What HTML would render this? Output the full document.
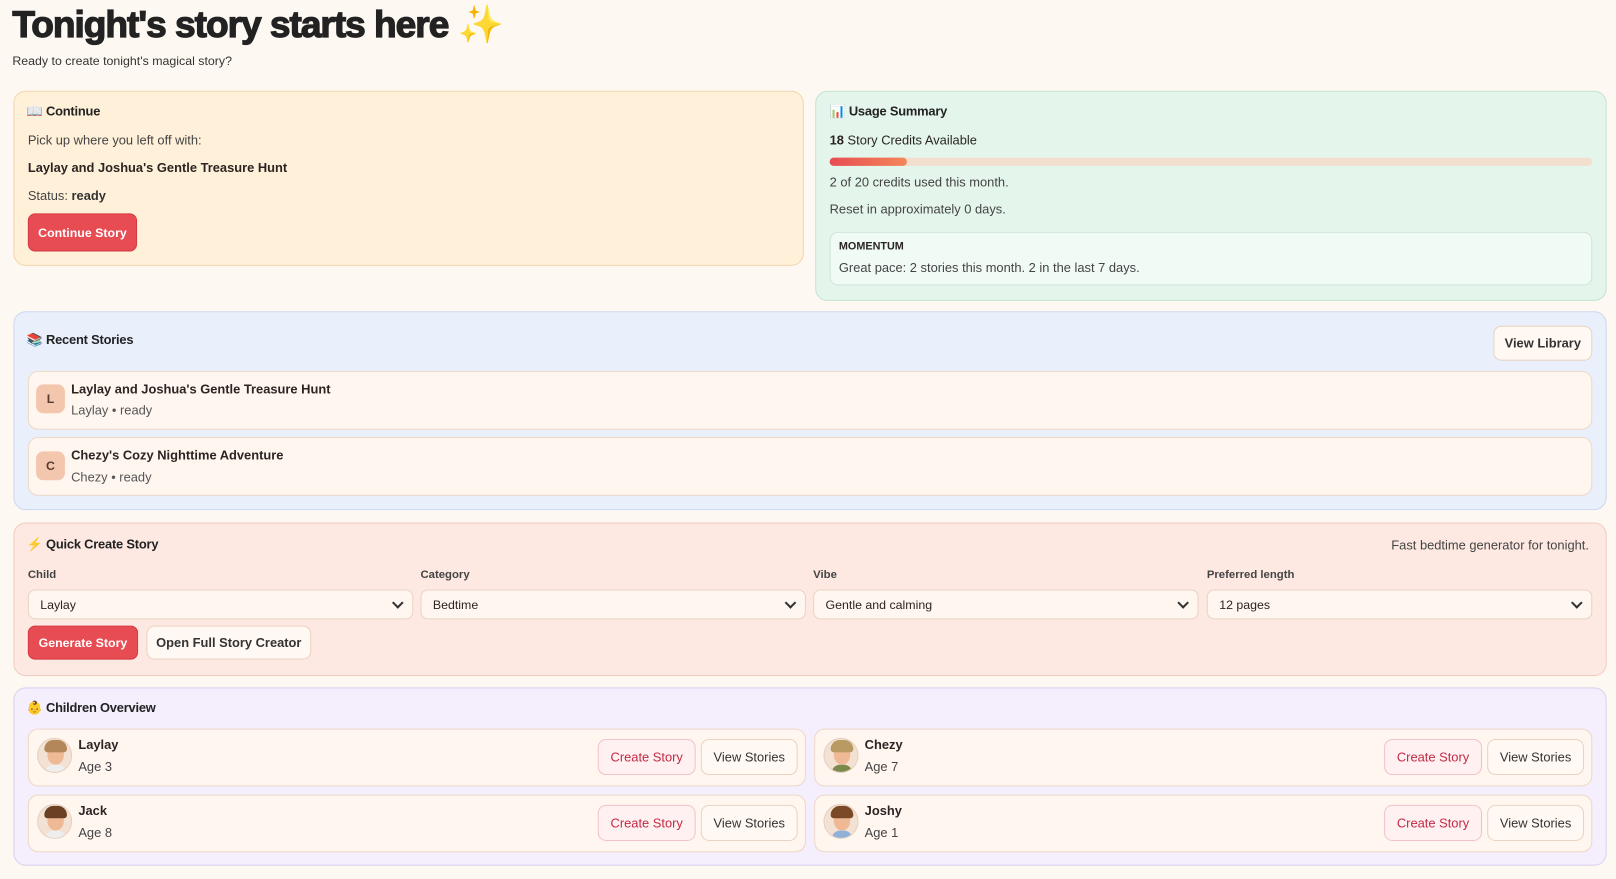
<!DOCTYPE html>
<html><head><meta charset="utf-8"><style>
*{box-sizing:border-box;margin:0;padding:0}
body{width:1616px;height:879px;background:#fef8f2;font-family:"Liberation Sans",sans-serif;color:#2a2522;overflow:hidden;font-size:12.5px}
#w{position:absolute;left:0;top:0;width:1568px;height:853px;transform:scale(1.0306);transform-origin:0 0}
.a{position:absolute}
h1{position:absolute;left:12px;top:3px;font-size:36px;font-weight:900;letter-spacing:-1px;color:#222;-webkit-text-stroke:1.2px #222}
.card{position:absolute;border-radius:12px;border:1px solid}
.t{position:absolute;font-weight:bold;font-size:12.5px;color:#222;letter-spacing:-0.2px}
.btnr{position:absolute;background:#e84c53;color:#fff;font-weight:bold;border-radius:7px;font-size:12px;display:flex;align-items:center;justify-content:center;border:1px solid #d43a42}
.btnw{position:absolute;background:#fff8f3;color:#333;border:1px solid #ead3c2;border-radius:8px;font-size:12.5px;display:flex;align-items:center;justify-content:center}
.btnp{position:absolute;background:#fff0f1;color:#c22b45;border:1px solid #f0c3c8;border-radius:8px;font-size:12.5px;display:flex;align-items:center;justify-content:center}
.row{position:absolute;background:#fff6f0;border:1px solid #eed8c7;border-radius:10px}
.sel{position:absolute;background:#fff6f0;border:1px solid #ead3c2;border-radius:7px;height:29px;top:572px;width:374px;font-size:12px;padding:7px 11px}
.sel:after{content:"";position:absolute;right:10px;top:8px;width:6px;height:6px;border-right:2px solid #333;border-bottom:2px solid #333;transform:rotate(45deg)}
.lbl{position:absolute;top:552px;font-size:11px;font-weight:bold;color:#444}
.av{position:absolute;width:34px;height:34px;border-radius:50%;background:#f3e2d4;border:1px solid #e6d0c0;overflow:hidden}
.av i{position:absolute;left:9px;top:6px;width:16px;height:19px;border-radius:50%;background:#f0b996}
.av b{position:absolute;left:6px;top:1px;width:22px;height:12px;border-radius:11px 11px 4px 4px}
.av u{position:absolute;left:7px;top:25px;width:20px;height:12px;border-radius:8px 8px 0 0;background:#eee}
</style></head><body><div id="w">
<h1>Tonight's story starts here <span style="color:#f5c542;-webkit-text-stroke:0">✨</span></h1>
<div class="a" style="left:12px;top:52px;font-size:12px;color:#333">Ready to create tonight's magical story?</div>

<div class="card" style="left:13px;top:88px;width:767px;height:170px;background:#fff0d9;border-color:#f2d6ad"></div>
<div class="t" style="left:26px;top:101px">📖 Continue</div>
<div class="a" style="left:27px;top:129px;color:#444">Pick up where you left off with:</div>
<div class="a" style="left:27px;top:156px;font-weight:bold">Laylay and Joshua's Gentle Treasure Hunt</div>
<div class="a" style="left:27px;top:183px;color:#444">Status: <b style="color:#333">ready</b></div>
<div class="btnr" style="left:27px;top:207px;width:106px;height:37px">Continue Story</div>

<div class="card" style="left:791px;top:88px;width:768px;height:204px;background:#e4f5ec;border-color:#c5e3d2"></div>
<div class="t" style="left:805px;top:101px">📊 Usage Summary</div>
<div class="a" style="left:805px;top:129px"><b>18</b> Story Credits Available</div>
<div class="a" style="left:805px;top:153px;width:740px;height:8px;border-radius:4px;background:#f3dfce"></div>
<div class="a" style="left:805px;top:153px;width:75px;height:8px;border-radius:4px;background:linear-gradient(90deg,#e84c53,#f2875a)"></div>
<div class="a" style="left:805px;top:170px;color:#444">2 of 20 credits used this month.</div>
<div class="a" style="left:805px;top:196px;color:#444">Reset in approximately 0 days.</div>
<div class="a" style="left:805px;top:225px;width:740px;height:52px;background:#f1fbf6;border:1px solid #cfe5d8;border-radius:8px"></div>
<div class="a" style="left:814px;top:233px;font-size:10.5px;font-weight:bold">MOMENTUM</div>
<div class="a" style="left:814px;top:253px;color:#444">Great pace: 2 stories this month. 2 in the last 7 days.</div>

<div class="card" style="left:13px;top:302px;width:1546px;height:193px;background:#e9f0fc;border-color:#cbd9ef"></div>
<div class="t" style="left:26px;top:323px">📚 Recent Stories</div>
<div class="btnw" style="left:1449px;top:316px;width:96px;height:34px;font-weight:bold">View Library</div>
<div class="row" style="left:27px;top:360px;width:1518px;height:57px"></div>
<div class="a" style="left:35px;top:373px;width:28px;height:28px;border-radius:7px;background:#f3c7ae;font-weight:bold;font-size:12px;display:flex;align-items:center;justify-content:center;color:#5a3a2a">L</div>
<div class="a" style="left:69px;top:371px;font-weight:bold">Laylay and Joshua's Gentle Treasure Hunt</div>
<div class="a" style="left:69px;top:391px;color:#555">Laylay • ready</div>
<div class="row" style="left:27px;top:424px;width:1518px;height:57px"></div>
<div class="a" style="left:35px;top:438px;width:28px;height:28px;border-radius:7px;background:#f3c7ae;font-weight:bold;font-size:12px;display:flex;align-items:center;justify-content:center;color:#5a3a2a">C</div>
<div class="a" style="left:69px;top:435px;font-weight:bold">Chezy's Cozy Nighttime Adventure</div>
<div class="a" style="left:69px;top:456px;color:#555">Chezy • ready</div>

<div class="card" style="left:13px;top:507px;width:1546px;height:149px;background:#fde9e2;border-color:#f1cdbf"></div>
<div class="t" style="left:26px;top:521px"><span style="color:#f5b942">⚡</span> Quick Create Story</div>
<div class="a" style="left:1350px;top:522px;color:#444">Fast bedtime generator for tonight.</div>
<div class="lbl" style="left:27px">Child</div>
<div class="lbl" style="left:408px">Category</div>
<div class="lbl" style="left:789px">Vibe</div>
<div class="lbl" style="left:1171px">Preferred length</div>
<div class="sel" style="left:27px">Laylay</div>
<div class="sel" style="left:408px">Bedtime</div>
<div class="sel" style="left:789px">Gentle and calming</div>
<div class="sel" style="left:1171px">12 pages</div>
<div class="btnr" style="left:27px;top:607px;width:107px;height:33px">Generate Story</div>
<div class="btnw" style="left:142px;top:607px;width:160px;height:33px;font-weight:bold">Open Full Story Creator</div>

<div class="card" style="left:13px;top:667px;width:1546px;height:173px;background:#f4eefd;border-color:#dcd2ee"></div>
<div class="t" style="left:26px;top:680px">👶 Children Overview</div>

<div class="row" style="left:27px;top:707px;width:755px;height:56px"></div>
<div class="av" style="left:36px;top:716px"><i></i><b style="background:#b4875a"></b><u></u></div>
<div class="a" style="left:76px;top:716px;font-weight:bold">Laylay</div>
<div class="a" style="left:76px;top:737px;color:#444">Age 3</div>
<div class="btnp" style="left:580px;top:717px;width:95px;height:35px">Create Story</div>
<div class="btnw" style="left:680px;top:717px;width:94px;height:35px">View Stories</div>

<div class="row" style="left:790px;top:707px;width:755px;height:56px"></div>
<div class="av" style="left:799px;top:716px"><i></i><b style="background:#b99a62"></b><u style="background:#7b8a4a"></u></div>
<div class="a" style="left:839px;top:716px;font-weight:bold">Chezy</div>
<div class="a" style="left:839px;top:737px;color:#444">Age 7</div>
<div class="btnp" style="left:1343px;top:717px;width:95px;height:35px">Create Story</div>
<div class="btnw" style="left:1443px;top:717px;width:94px;height:35px">View Stories</div>

<div class="row" style="left:27px;top:771px;width:755px;height:56px"></div>
<div class="av" style="left:36px;top:780px"><i></i><b style="background:#6b3f24"></b><u></u></div>
<div class="a" style="left:76px;top:780px;font-weight:bold">Jack</div>
<div class="a" style="left:76px;top:801px;color:#444">Age 8</div>
<div class="btnp" style="left:580px;top:781px;width:95px;height:35px">Create Story</div>
<div class="btnw" style="left:680px;top:781px;width:94px;height:35px">View Stories</div>

<div class="row" style="left:790px;top:771px;width:755px;height:56px"></div>
<div class="av" style="left:799px;top:780px"><i></i><b style="background:#7a4a28"></b><u style="background:#8fb0d8"></u></div>
<div class="a" style="left:839px;top:780px;font-weight:bold">Joshy</div>
<div class="a" style="left:839px;top:801px;color:#444">Age 1</div>
<div class="btnp" style="left:1343px;top:781px;width:95px;height:35px">Create Story</div>
<div class="btnw" style="left:1443px;top:781px;width:94px;height:35px">View Stories</div>
</div></body></html>
